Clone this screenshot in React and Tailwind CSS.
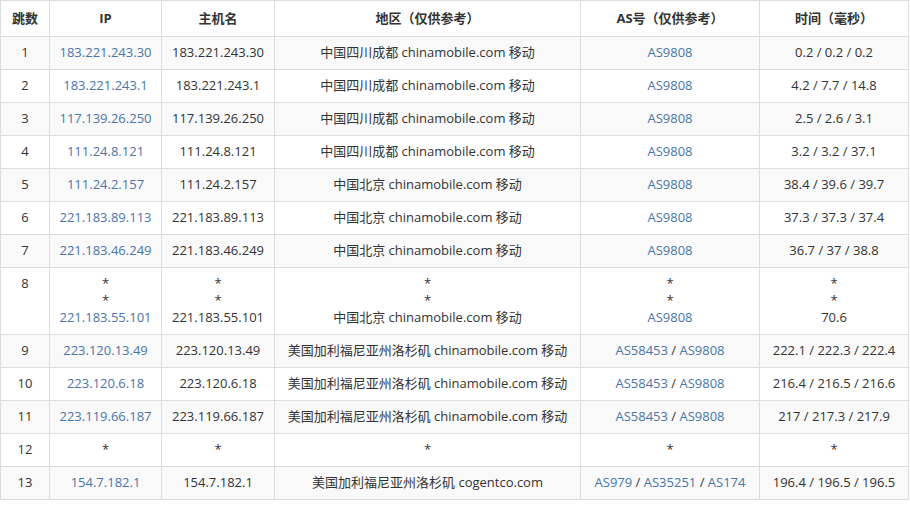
const rows = [
  ["1", ["183.221.243.30"], ["183.221.243.30"], ["中国四川成都 chinamobile.com 移动"], [["AS9808"]], ["0.2 / 0.2 / 0.2"]],
  ["2", ["183.221.243.1"], ["183.221.243.1"], ["中国四川成都 chinamobile.com 移动"], [["AS9808"]], ["4.2 / 7.7 / 14.8"]],
  ["3", ["117.139.26.250"], ["117.139.26.250"], ["中国四川成都 chinamobile.com 移动"], [["AS9808"]], ["2.5 / 2.6 / 3.1"]],
  ["4", ["111.24.8.121"], ["111.24.8.121"], ["中国四川成都 chinamobile.com 移动"], [["AS9808"]], ["3.2 / 3.2 / 37.1"]],
  ["5", ["111.24.2.157"], ["111.24.2.157"], ["中国北京 chinamobile.com 移动"], [["AS9808"]], ["38.4 / 39.6 / 39.7"]],
  ["6", ["221.183.89.113"], ["221.183.89.113"], ["中国北京 chinamobile.com 移动"], [["AS9808"]], ["37.3 / 37.3 / 37.4"]],
  ["7", ["221.183.46.249"], ["221.183.46.249"], ["中国北京 chinamobile.com 移动"], [["AS9808"]], ["36.7 / 37 / 38.8"]],
  ["8", ["*", "*", "221.183.55.101"], ["*", "*", "221.183.55.101"], ["*", "*", "中国北京 chinamobile.com 移动"], ["*", "*", ["AS9808"]], ["*", "*", "70.6"]],
  ["9", ["223.120.13.49"], ["223.120.13.49"], ["美国加利福尼亚州洛杉矶 chinamobile.com 移动"], [["AS58453", "AS9808"]], ["222.1 / 222.3 / 222.4"]],
  ["10", ["223.120.6.18"], ["223.120.6.18"], ["美国加利福尼亚州洛杉矶 chinamobile.com 移动"], [["AS58453", "AS9808"]], ["216.4 / 216.5 / 216.6"]],
  ["11", ["223.119.66.187"], ["223.119.66.187"], ["美国加利福尼亚州洛杉矶 chinamobile.com 移动"], [["AS58453", "AS9808"]], ["217 / 217.3 / 217.9"]],
  ["12", ["*"], ["*"], ["*"], ["*"], ["*"]],
  ["13", ["154.7.182.1"], ["154.7.182.1"], ["美国加利福尼亚州洛杉矶 cogentco.com"], [["AS979", "AS35251", "AS174"]], ["196.4 / 196.5 / 196.5"]],
];

const link = "text-[#4a75a8]";

function Lines({ items, ip }) {
  return items.map((it, i) => (
    <div key={i}>
      {Array.isArray(it) ? (
        it.map((a, j) => (
          <span key={j}>
            {j > 0 && " / "}
            <span className={link}>{a}</span>
          </span>
        ))
      ) : ip && it !== "*" ? (
        <span className={link}>{it}</span>
      ) : (
        it
      )}
    </div>
  ));
}

export default function App() {
  const th = "border border-[#ddd] h-[36px] font-bold text-[#333]";
  const td = "border border-[#ddd] px-2 pt-[7px] pb-[8px] align-top leading-[17px]";
  return (
    <div className="bg-white w-[910px] h-[507px]" style={{ fontFamily: '"Open Sans", "Noto Sans CJK SC", sans-serif' }}>
      <table className="w-[908px] border-collapse text-[13px] text-[#333] text-center table-fixed">
        <colgroup>
          <col className="w-[49px]" />
          <col className="w-[112px]" />
          <col className="w-[113px]" />
          <col className="w-[306px]" />
          <col className="w-[179px]" />
          <col className="w-[149px]" />
        </colgroup>
        <thead>
          <tr>
            <th className={th}>跳数</th>
            <th className={th}>IP</th>
            <th className={th}>主机名</th>
            <th className={th}>地区（仅供参考）</th>
            <th className={th}>AS号（仅供参考）</th>
            <th className={th}>时间（毫秒）</th>
          </tr>
        </thead>
        <tbody>
          {rows.map((r, i) => (
            <tr key={i} className={i % 2 === 0 ? "bg-[#f9f9f9]" : "bg-white"}>
              <td className={td}>{r[0]}</td>
              <td className={td}><Lines items={r[1]} ip /></td>
              <td className={td}><Lines items={r[2]} /></td>
              <td className={td}><Lines items={r[3]} /></td>
              <td className={td}><Lines items={r[4]} /></td>
              <td className={td}><Lines items={r[5]} /></td>
            </tr>
          ))}
        </tbody>
      </table>
    </div>
  );
}
